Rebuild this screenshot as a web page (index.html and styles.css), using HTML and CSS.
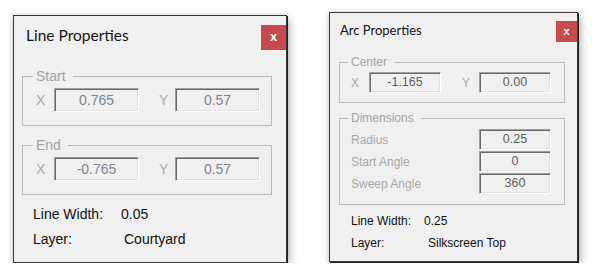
FILE: index.html
```html
<!DOCTYPE html>
<html>
<head>
<meta charset="utf-8">
<link rel="stylesheet" href="styles.css">
</head>
<body>
  <div class="win win-line">
    <div class="titlebar">
      <span class="title">Line Properties</span>
      <span class="close">x</span>
    </div>
    <div class="content">
      <fieldset class="group group-first">
        <legend>Start</legend>
        <div class="row">
          <span class="lbl">X</span><span class="field">0.765</span>
          <span class="lbl lbl-y">Y</span><span class="field">0.57</span>
        </div>
      </fieldset>
      <fieldset class="group group-next">
        <legend>End</legend>
        <div class="row">
          <span class="lbl">X</span><span class="field">-0.765</span>
          <span class="lbl lbl-y">Y</span><span class="field">0.57</span>
        </div>
      </fieldset>
      <div class="info">
        <span>Line Width:</span><span>0.05</span>
        <span>Layer:</span><span class="shift">Courtyard</span>
      </div>
    </div>
  </div>

  <div class="win win-arc">
    <div class="titlebar">
      <span class="title">Arc Properties</span>
      <span class="close">x</span>
    </div>
    <div class="content">
      <fieldset class="group group-center">
        <legend>Center</legend>
        <div class="row">
          <span class="lbl">X</span><span class="field">-1.165</span>
          <span class="lbl lbl-y">Y</span><span class="field">0.00</span>
        </div>
      </fieldset>
      <fieldset class="group group-dims">
        <legend>Dimensions</legend>
        <div class="dim-row"><span class="dlbl">Radius</span><span class="field">0.25</span></div>
        <div class="dim-row"><span class="dlbl">Start Angle</span><span class="field">0</span></div>
        <div class="dim-row"><span class="dlbl">Sweep Angle</span><span class="field">360</span></div>
      </fieldset>
      <div class="info">
        <span>Line Width:</span><span>0.25</span>
        <span>Layer:</span><span class="shift">Silkscreen Top</span>
      </div>
    </div>
  </div>
</body>
</html>
```

FILE: styles.css
```css
html, body {
  margin: 0;
  background: #ffffff;
}

body {
  display: flex;
  align-items: flex-start;
  padding-left: 13px;
  font-family: "Liberation Sans", Arial, sans-serif;
  color: #111;
}

.win {
  box-sizing: border-box;
  background: #f0f0f0;
  border: 1px solid #3a3a3a;
  box-shadow: 1px 1px 0 #1e1e1e, 3px 4px 8px rgba(0, 0, 0, 0.28), -1px 0 5px rgba(0, 0, 0, 0.12);
  display: flex;
  flex-direction: column;
}

.titlebar {
  display: flex;
  justify-content: space-between;
  align-items: flex-start;
}

.title {
  font-family: Lato, "Open Sans", sans-serif;
  color: #141414;
}

.close {
  background: #c94a4c;
  color: #fff;
  font-weight: bold;
  text-align: center;
}

.group {
  margin: 0;
  min-width: 0;
  border: 1px solid #bcbcbc;
}

.group legend {
  padding: 0 7px 0 3px;
  margin-left: -3px;
  color: #a4a4a8;
}

.row {
  display: flex;
  align-items: center;
}

.lbl {
  color: #aaaaaa;
}

.field {
  box-sizing: border-box;
  background: #f0f0f0;
  border: 1px solid;
  border-color: #a0a0a0 #ffffff #ffffff #a0a0a0;
  box-shadow: inset 1px 1px 0 #6a6a6a, inset -1px -1px 0 #e3e3e3;
  text-align: center;
}

.info {
  display: grid;
  color: #111;
}

/* ---------- Line Properties ---------- */
.win-line {
  width: 274px;
  height: 248px;
  margin-top: 15px;
}

.win-line .titlebar {
  height: 34px;
}

.win-line .title {
  font-size: 15.5px;
  line-height: 20px;
  padding: 9px 0 0 12px;
}

.win-line .close {
  width: 25px;
  height: 25px;
  margin: 9px 0 0 0;
  font-size: 13px;
  line-height: 24px;
}

.win-line .content {
  padding: 0 14px 0 8px;
  font-size: 14px;
}

.win-line .group {
  padding: 4px 10px 13px 13px;
}

.win-line .group-first {
  margin-top: 18px;
}

.win-line .group-next {
  margin-top: 11px;
}

.win-line legend {
  font-size: 14px;
  line-height: 16px;
}

.win-line .lbl {
  width: 18px;
}

.win-line .lbl-y {
  width: 16px;
  margin-left: 20px;
}

.win-line .field {
  width: 85px;
  height: 24px;
  line-height: 22px;
  color: #7f8491;
}

.win-line .info {
  margin-top: 7px;
  padding-left: 11px;
  grid-template-columns: 88px auto;
  line-height: 25px;
}

.win-line .shift {
  padding-left: 3px;
}

/* ---------- Arc Properties ---------- */
.win-arc {
  width: 249px;
  height: 250px;
  margin-top: 12px;
  margin-left: 42px;
}

.win-arc .titlebar {
  height: 29px;
}

.win-arc .title {
  font-size: 13px;
  line-height: 18px;
  padding: 8px 0 0 10px;
}

.win-arc .close {
  width: 21px;
  height: 21px;
  margin-top: 8px;
  font-size: 11px;
  line-height: 20px;
}

.win-arc .content {
  padding: 0 12px 0 9px;
  font-size: 12px;
}

.win-arc legend {
  font-size: 12px;
  line-height: 14px;
}

.win-arc .group-center {
  margin-top: 13px;
  padding: 3px 13px 9px 11px;
}

.win-arc .group-dims {
  margin-top: 8px;
  padding: 4px 13px 10px 11px;
  display: flex;
  flex-direction: column;
  gap: 1px;
}

.win-arc .lbl {
  width: 18px;
}

.win-arc .lbl-y {
  width: 17px;
  margin-left: 21px;
}

.win-arc .field {
  width: 72px;
  height: 21px;
  line-height: 19px;
  color: #5e5e5e;
  font-size: 12.5px;
}

.dim-row {
  display: flex;
  align-items: center;
}

.dlbl {
  width: 128px;
  color: #aaaaaa;
}

.win-arc .info {
  margin-top: 5px;
  padding-left: 12px;
  grid-template-columns: 73px auto;
  line-height: 22px;
}

.win-arc .shift {
  padding-left: 4px;
}
```
